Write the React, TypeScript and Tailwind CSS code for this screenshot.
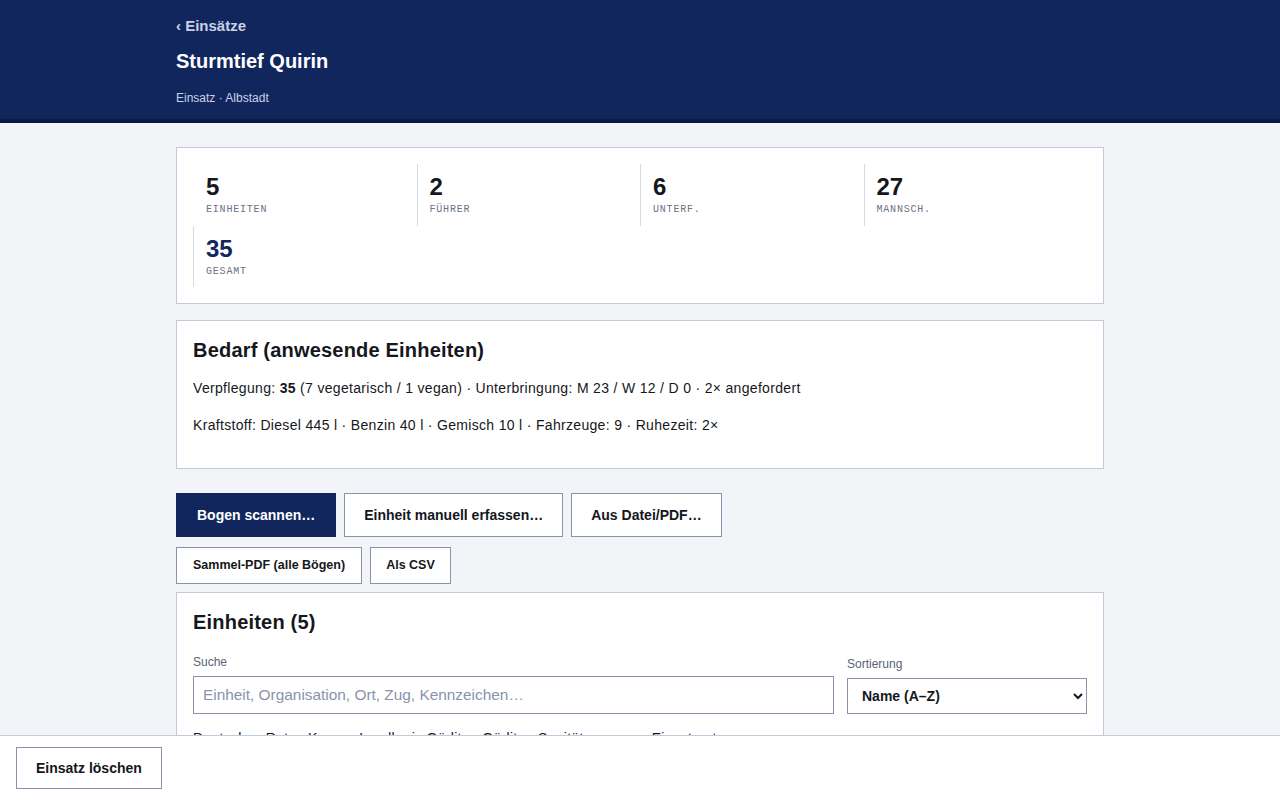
import React from "react";

const stats = [
  { n: "5", l: "EINHEITEN", first: true },
  { n: "2", l: "FÜHRER" },
  { n: "6", l: "UNTERF." },
  { n: "27", l: "MANNSCH." },
  { n: "35", l: "GESAMT", accent: true },
];

export default function App() {
  return (
    <div className="min-h-screen bg-[#f3f4f8] text-[#15171c] pb-[80px]" style={{ fontFamily: '"Liberation Sans", Arial, sans-serif' }}>
      <header className="bg-[#12265e] border-b-4 border-[#0c1a45]">
        <div className="max-w-[928px] mx-auto pt-[16px] pb-[13px]">
          <div className="text-[15px] font-bold text-[#c9d1e6] leading-[20px]">‹ Einsätze</div>
          <h1 className="mt-[11px] text-[20px] font-bold text-white leading-[28px]">Sturmtief Quirin</h1>
          <div className="mt-[15px] text-[12px] text-[#c9d1e6] leading-[16px]">Einsatz · Albstadt</div>
        </div>
      </header>

      <main className="max-w-[928px] mx-auto pt-[24px]">
        <section className="bg-white border border-[#c2cadb] p-[16px]">
          <div className="grid grid-cols-4">
            {stats.map((s, i) => (
              <div key={i} className={`border-l ${s.first ? "border-transparent" : "border-[#d5dae5]"} pl-[12px] pt-[8px] pb-[7.5px]`}>
                <div className={`text-[24px] font-bold leading-[30px] ${s.accent ? "text-[#12265e]" : "text-[#15171c]"}`}>{s.n}</div>
                <div className="text-[10px] leading-[16px] tracking-[0.08em] text-[#6b7285]" style={{ fontFamily: '"Liberation Mono", "DejaVu Sans Mono", monospace' }}>{s.l}</div>
              </div>
            ))}
          </div>
        </section>

        <section className="mt-[16px] bg-white border border-[#c2cadb] px-[16px] pt-[16px] pb-[33px] tracking-[0.02em]">
          <h2 className="text-[20px] font-bold leading-[26px] tracking-[0.01em]">Bedarf (anwesende Einheiten)</h2>
          <p className="mt-[15px] text-[14px] leading-[20px]">
            Verpflegung: <b>35</b> (7 vegetarisch / 1 vegan) · Unterbringung: M 23 / W 12 / D 0 · 2× angefordert
          </p>
          <p className="mt-[17px] text-[14px] leading-[20px]">
            Kraftstoff: Diesel 445 l · Benzin 40 l · Gemisch 10 l · Fahrzeuge: 9 · Ruhezeit: 2×
          </p>
        </section>

        <div className="mt-[24px] flex gap-[8px]">
          <button className="h-[44px] px-[20px] bg-[#12265e] text-white text-[14px] font-semibold border border-[#12265e]">Bogen scannen…</button>
          <button className="h-[44px] px-[19px] bg-white text-[#15171c] text-[14px] font-semibold border border-[#8a93ab]">Einheit manuell erfassen…</button>
          <button className="h-[44px] px-[19px] bg-white text-[#15171c] text-[14px] font-semibold border border-[#8a93ab]">Aus Datei/PDF…</button>
        </div>
        <div className="mt-[10px] flex gap-[8px]">
          <button className="h-[37px] px-[16px] bg-white text-[#15171c] text-[12.5px] font-semibold border border-[#8a93ab]">Sammel-PDF (alle Bögen)</button>
          <button className="h-[37px] px-[15px] bg-white text-[#15171c] text-[12.5px] font-semibold border border-[#8a93ab]">Als CSV</button>
        </div>

        <section className="mt-[8px] bg-white border border-[#c2cadb] px-[16px] pt-[16px] pb-[16px]">
          <h2 className="text-[20px] font-bold leading-[26px] tracking-[0.01em]">Einheiten (5)</h2>
          <div className="mt-[19px] flex items-end gap-[13px]">
            <label className="flex-1 flex flex-col">
              <span className="text-[12px] text-[#5a6275] leading-[16px] mb-[6px]">Suche</span>
              <input className="h-[38px] px-[9px] border border-[#8a93ab] text-[15.4px] outline-none placeholder:text-[#8a93ab]" placeholder="Einheit, Organisation, Ort, Zug, Kennzeichen…" />
            </label>
            <label className="w-[240px] flex flex-col">
              <span className="text-[12px] text-[#5a6275] leading-[16px] mb-[6px]">Sortierung</span>
              <select className="h-[36px] px-[10px] border border-[#8a93ab] bg-white text-[14px] font-semibold text-[#15171c]">
                <option>Name (A–Z)</option>
              </select>
            </label>
          </div>
          <div className="mt-[14px] text-[14px] leading-[20px] tracking-[0.02em]">Deutsches Rotes Kreuz · Landkreis Görlitz · Görlitz · Sanitätszug · am Einsatzort</div>
          <div className="h-[200px]" />
        </section>
      </main>

      <footer className="fixed bottom-0 left-0 right-0 h-[65px] bg-white border-t border-[#c2cadb] flex items-center px-[16px]">
        <button className="h-[42px] px-[19px] bg-white text-[#15171c] text-[14px] font-semibold border border-[#8a93ab]">Einsatz löschen</button>
      </footer>
    </div>
  );
}
